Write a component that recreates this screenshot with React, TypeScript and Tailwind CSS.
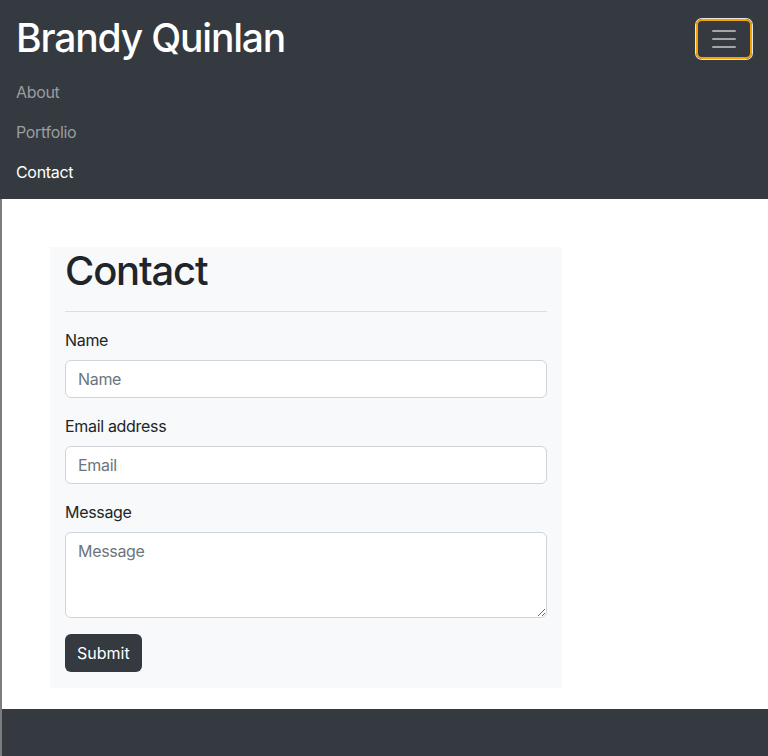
import React from "react";

const navLinks = [
  { label: "About", active: false },
  { label: "Portfolio", active: false },
  { label: "Contact", active: true },
];

const inputClass =
  "block w-full h-[38px] px-3 rounded-[6px] border border-[#ced4da] bg-white text-base text-[#212529] placeholder:text-[#6c757d] outline-none";

export default function App() {
  return (
    <div className="min-h-[756px] flex flex-col bg-white text-[#212529] tracking-[-0.02em] font-['Inter','Liberation_Sans',sans-serif]">
      <header className="bg-[#343a40] px-4 pt-2 pb-[7px]">
        <div className="flex items-center justify-between h-16">
          <a href="#" className="text-[39px] leading-[60px] font-medium text-white tracking-[-0.03em] -mt-1">
            Brandy Quinlan
          </a>
          <button
            type="button"
            className="w-[56px] h-[40px] -mt-[2px] flex items-center justify-center rounded-[6px] border-2 border-[#f5a300] ring-1 ring-[#e6e6e6]"
          >
            <svg width="30" height="30" viewBox="0 0 30 30" fill="none">
              <path
                d="M4 7h22M4 15h22M4 23h22"
                stroke="rgba(255,255,255,0.55)"
                strokeWidth="2"
                strokeLinecap="round"
              />
            </svg>
          </button>
        </div>
        <ul className="flex flex-col">
          {navLinks.map((l) => (
            <li key={l.label}>
              <a
                href="#"
                className={`block py-2 text-base leading-6 ${
                  l.active ? "text-white" : "text-[#9a9da0]"
                }`}
              >
                {l.label}
              </a>
            </li>
          ))}
        </ul>
      </header>

      <div className="flex-1 flex flex-col border-l-2 border-[#7d7d7d]">
        <main className="flex-1 pt-12 pb-[21px]">
          <div className="ml-12 w-[512px] bg-[#f8f9fa] px-[15px] pb-4">
            <h1 className="text-[40px] leading-[48px] font-medium tracking-[-0.03em]">Contact</h1>
            <hr className="my-4 border-0 border-t border-[#dcdfe2]" />
            <form className="flex flex-col gap-4">
              <div>
                <label className="block mb-2 text-base leading-6">Name</label>
                <input type="text" placeholder="Name" className={inputClass} />
              </div>
              <div>
                <label className="block mb-2 text-base leading-6">Email address</label>
                <input type="email" placeholder="Email" className={inputClass} />
              </div>
              <div>
                <label className="block mb-2 text-base leading-6">Message</label>
                <textarea
                  placeholder="Message"
                  className="block w-full h-[86px] px-3 py-1.5 rounded-[6px] border border-[#ced4da] bg-white text-base leading-6 text-[#212529] placeholder:text-[#6c757d] outline-none"
                />
              </div>
              <div>
                <button
                  type="submit"
                  className="h-[38px] px-3 rounded-[6px] bg-[#343a40] text-white text-base tracking-normal"
                >
                  Submit
                </button>
              </div>
            </form>
          </div>
        </main>
        <footer className="bg-[#343a40] h-12" />
      </div>
    </div>
  );
}
